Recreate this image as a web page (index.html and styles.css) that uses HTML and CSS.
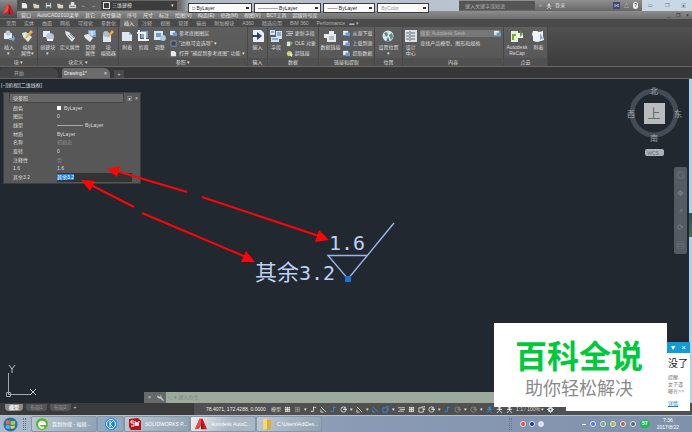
FILE: index.html
```html
<!DOCTYPE html>
<html lang="zh-CN">
  <head>
    <meta charset="utf-8" />
    <meta name="viewport" content="width=device-width, initial-scale=1" />
    <title>Drawing1*</title>
    <link rel="stylesheet" href="styles.css">
  </head>

  <body>
    <svg class="sprite" aria-hidden="true">
      <symbol id="logo" viewBox="0 0 16 16">
        <path d="M0 15 6 1h4l6 14h-5L8 10l-3 4z" fill="#c9171e" />
        <path d="M6 1h2v9l-8 5z" fill="#f04a45" />
        <path d="M8 6l3 9H8z" fill="#7d0d12" />
      </symbol>
      <symbol id="block" viewBox="0 0 12 12">
        <path d="M1 3h8v6H1z" fill="#e4ecf4" />
        <circle cx="5" cy="3" r="2.5" fill="#b9c9da" />
        <path d="M6 8h4V5l2 3-2 4-1-2H6z" fill="#7fa9d6" />
      </symbol>
      <symbol id="create" viewBox="0 0 12 12">
        <path d="M1 1h7v6H1z" fill="#e4ecf4" />
        <circle cx="8" cy="7" r="4" fill="#b4c8dc" />
        <path d="M5 9h6v2H5z" fill="#eef2f6" />
      </symbol>
      <symbol id="tag" viewBox="0 0 12 12">
        <path d="M1 1l4 1 6 6-3 4-6-7z" fill="#dfe3e6" />
        <path d="M4 5l4 4M6 4l4 4" stroke="#8a8f93" fill="none" />
      </symbol>
      <symbol id="edit" viewBox="0 0 12 12">
        <path d="M1 3l4-1 6 5-4 5-5-5z" fill="#e2e4de" />
        <path d="M10 0l2 2-6 6-2 1 1-3z" fill="#e9b44a" />
      </symbol>
      <symbol id="manage" viewBox="0 0 12 12">
        <path d="M4 0h8v7H4z" fill="#78a3d0" />
        <path d="M5 2h6M5 4h6M8 1v5" stroke="#e8f2fb" />
        <path d="M0 5l4-1 5 4-3 4-5-4z" fill="#e4e8ea" />
      </symbol>
      <symbol id="blockedit" viewBox="0 0 12 12">
        <path d="M1 5h8v7H1z" fill="#dce6ef" />
        <circle cx="4" cy="4" r="3" fill="#a9bfd4" />
        <path d="M10 0l2 2-5 5-2 1 1-3z" fill="#f0a63a" />
      </symbol>
      <symbol id="page" viewBox="0 0 12 12">
        <path d="M1 2h7l3 3v6H1z" fill="#dde7f1" />
        <path d="M8 2v3h3" fill="#9cb4cc" />
      </symbol>
      <symbol id="clip" viewBox="0 0 12 12">
        <path d="M4 1h7v7H4z" fill="#7da8d6" />
        <path d="M2 0v10h10M0 3h8v8" stroke="#eef3f7" stroke-width="2" fill="none" />
      </symbol>
      <symbol id="adjust" viewBox="0 0 12 12">
        <path d="M0 1h9v9H0z" fill="#dde6ee" />
        <path d="M2 3h5v4H2z" fill="#6c9ccf" />
        <circle cx="9" cy="8" r="3" fill="#a8c9ea" />
      </symbol>
      <symbol id="import" viewBox="0 0 12 12">
        <path d="M1 0h8l3 3v9H1z" fill="#e9eff5" />
        <path d="M0 5h5V2l5 4-5 4V7H0z" fill="#26445f" />
      </symbol>
      <symbol id="field" viewBox="0 0 12 12">
        <path d="M0 0h5v5H0zM6 1h6v8H6zM1 7h8v5H1z" fill="#cfe0f0" />
        <path d="M1 2h3M7 3h4M7 5h4M2 9h6" stroke="#4a7fb5" />
      </symbol>
      <symbol id="link" viewBox="0 0 12 12">
        <path d="M0 4h5V1h5v3h2v8H3V8H0z" fill="#e7ecef" />
        <path d="M5 7h5M5 9h5" stroke="#87939c" />
      </symbol>
      <symbol id="globe" viewBox="0 0 12 12">
        <circle cx="6" cy="6" r="5.500" fill="#d4e6e8" />
        <path d="M2 3l3-1 1 3-2 2zM7 5l3-2 1 4-2 3z" fill="#5b8b7e" />
        <path d="M6 7l2 5-2-1-2 1z" fill="#3f6f94" />
      </symbol>
      <symbol id="center" viewBox="0 0 12 12">
        <path d="M0 0h12v12H0z" fill="#dfe3e7" />
        <path d="M1 3h3M6 3h4M1 6h3M6 6h4M1 9h3M6 9h4M5 1v10" stroke="#5b6d7e" />
      </symbol>
      <symbol id="recap" viewBox="0 0 12 12">
        <path d="M0 1h7v11H0z" fill="#e5efd7" />
        <path d="M2 10V5h3" stroke="#76a832" stroke-width="2" fill="none" />
        <path d="M6 3h6v5H6z" fill="#f3f6f8" />
        <path d="M9 1l3 3-3 3z" fill="#5c9b3a" />
      </symbol>
      <symbol id="cloud" viewBox="0 0 12 12">
        <path d="M1 1h4l2 1 4-1v5l1 4-3 1-4 1-4-1V7L0 4z" fill="#eef3f8" />
        <path d="M8 3l3 5-3 2z" fill="#86add3" />
      </symbol>
      <symbol id="small" viewBox="0 0 8 8">
        <path d="M0 1h6v5H0z" fill="#cfe0f0" />
        <path d="M3 3h5v4H3z" fill="#6b9bd0" />
        <path d="M1 2h3" stroke="#fff" />
      </symbol>
      <symbol id="frame" viewBox="0 0 8 8">
        <path d="M1 1h6v6H1z" fill="#3b4654" stroke="#7e9cc0" />
      </symbol>
      <symbol id="lines" viewBox="0 0 8 8">
        <path d="M0 2h8M2 4h6M0 6h7" stroke="#d5d5d5" />
      </symbol>
      <symbol id="ole" viewBox="0 0 8 8">
        <path d="M1 2h4v5H1z" fill="#e2e6e0" />
        <path d="M4 1l4 2-3 3z" fill="#82b36a" />
      </symbol>
      <symbol id="hyper" viewBox="0 0 8 8">
        <circle cx="4" cy="4" r="3" fill="#c8d66a" />
        <path d="M4 4l4 1-2 3z" fill="#e9edf0" />
      </symbol>
      <symbol id="grid" viewBox="0 0 8 8">
        <path d="M1 2h6M1 4h6M1 6h6M2 1v6M4 1v6M6 1v6" stroke="currentColor" />
      </symbol>
      <symbol id="ortho" viewBox="0 0 8 8">
        <path d="M4 1v5H1M4 1l3 1M2 6v1" stroke="currentColor" fill="none" />
      </symbol>
      <symbol id="polar" viewBox="0 0 8 8">
        <circle cx="4" cy="4" r="3" stroke="currentColor" fill="none" />
        <path d="M4 4h4M4 4l2-3" stroke="currentColor" />
      </symbol>
      <symbol id="slope" viewBox="0 0 8 8">
        <path d="M1 1l6 6M1 4v3h3" stroke="currentColor" fill="none" />
      </symbol>
      <symbol id="square" viewBox="0 0 8 8">
        <path d="M1 2h5v5H1zM4 0h4v4H6" stroke="currentColor" fill="none" />
      </symbol>
      <symbol id="person" viewBox="0 0 8 8">
        <circle cx="4" cy="2" r="1.500" fill="currentColor" />
        <path d="M4 3v2L1 8M4 5l3 3M1 4h6" stroke="currentColor" fill="none" />
      </symbol>
      <symbol id="gear" viewBox="0 0 8 8">
        <circle cx="4" cy="4" r="2" stroke="currentColor" stroke-width="2" fill="none" />
        <path d="M4 0v2M4 6v2M0 4h2M6 4h2" stroke="currentColor" />
      </symbol>
      <symbol id="wrench" viewBox="0 0 8 8">
        <path d="M1 1l1 2 2 0 0-2 1 1v2l3 3-1 1-3-3H2L0 3z" fill="#d0d0d0" />
      </symbol>
      <symbol id="doc" viewBox="0 0 8 8">
        <path d="M1 1h4l2 2v4H1z" fill="#e9e9e9" />
      </symbol>
      <symbol id="open" viewBox="0 0 8 8">
        <path d="M0 2h3l1 1h3v4H1z" fill="#d9d2bc" />
      </symbol>
      <symbol id="save" viewBox="0 0 8 8">
        <path d="M1 1h6v6H1z" fill="#d3d8de" />
        <path d="M2 1h4v2H2zM2 5h4v2H2z" fill="#4d5862" />
      </symbol>
      <symbol id="print" viewBox="0 0 8 8">
        <path d="M2 0h4v3h2v4H0V3h2z" fill="#dcdcdc" />
        <path d="M1 5h6" stroke="#666" />
      </symbol>
    </svg>

    <header class="titlebar">
      <button class="app-button" aria-label="应用程序菜单"><svg><use href="#logo" /></svg></button>
      <div class="title-main">
        <div class="quick">
          <button aria-label="新建"><svg><use href="#doc" /></svg></button>
          <button aria-label="打开"><svg><use href="#open" /></svg></button>
          <button aria-label="保存"><svg><use href="#save" /></svg></button>
          <button aria-label="另存为"><svg><use href="#open" /></svg></button>
          <button aria-label="打印"><svg><use href="#print" /></svg></button>
          <button aria-label="放弃">←</button>
          <button aria-label="重做">→</button>
          <button class="workspace">三维建模</button>
        </div>
        <div class="layers">
          <select class="by-color" aria-label="颜色"><option>□ ByLayer</option></select>
          <select class="by-line" aria-label="线型"><option>———— ByLayer</option></select>
          <select class="by-weight" aria-label="线宽"><option>—— ByLayer</option></select>
          <select class="by-style" aria-label="打印样式" disabled><option>ByColor</option></select>
        </div>
        <div class="infocenter">
          <input type="text" aria-label="搜索" placeholder="键入关键字或短语" />
          <button aria-label="查找">⌕</button>
          <button><svg><use href="#person" /></svg>登录</button>
          <span class="spacer"></span>
          <button class="exchange" aria-label="交换">⋈</button>
          <button aria-label="连接">△</button>
          <button class="help" aria-label="帮助">?</button>
        </div>
        <div class="window-buttons">
          <button aria-label="最小化">▭</button>
          <button aria-label="还原">❐</button>
          <button aria-label="关闭">▣</button>
        </div>
      </div>
    </header>

    <nav class="menubar">
      <a href="#">窗口</a>
      <a href="#">AutoCAD2010菜单</a>
      <a href="#">其它</a>
      <a href="#">尺寸驱动</a>
      <a href="#">序号</a>
      <a href="#">尺寸</a>
      <a href="#">标注</a>
      <a href="#">绘图(V)</a>
      <a href="#">构造(E)</a>
      <a href="#">修改(M)</a>
      <a href="#">视图(V)</a>
      <a href="#">BCT工具</a>
      <a href="#">超级符号库</a>
      <span class="spacer"></span>
      <button aria-label="最小化">_</button>
      <button aria-label="还原">❐</button>
      <button aria-label="关闭">×</button>
    </nav>

    <nav class="ribbon-tabs">
      <a href="#">常用</a>
      <a href="#">实体</a>
      <a href="#">曲面</a>
      <a href="#">网格</a>
      <a href="#">可视化</a>
      <a href="#">参数化</a>
      <a href="#" class="active">插入</a>
      <a href="#">注释</a>
      <a href="#">视图</a>
      <a href="#">管理</a>
      <a href="#">输出</a>
      <a href="#">附加模块</a>
      <a href="#">A360</a>
      <a href="#">精选应用</a>
      <a href="#">BIM 360</a>
      <a href="#">Performance</a>
      <button aria-label="最小化功能区">▬ ▾</button>
    </nav>

    <section class="ribbon">
      <div class="panel panel-block">
        <div class="tools">
          <button class="tool"><svg><use href="#block" /></svg>插入<br />▾</button>
          <button class="tool"><svg><use href="#edit" /></svg>编辑<br />属性▾</button>
        </div>
        <h2>块 ▾</h2>
      </div>
      <div class="panel panel-define">
        <div class="tools">
          <button class="tool"><svg><use href="#create" /></svg>创建块<br />▾</button>
          <button class="tool"><svg><use href="#tag" /></svg>定义属性</button>
          <button class="tool"><svg><use href="#manage" /></svg>管理<br />属性</button>
          <button class="tool"><svg><use href="#blockedit" /></svg>块<br />编辑器</button>
        </div>
        <h2>块定义 ▾</h2>
      </div>
      <div class="panel panel-reference">
        <div class="tools">
          <button class="tool"><svg><use href="#page" /></svg>附着</button>
          <button class="tool"><svg><use href="#clip" /></svg>剪裁</button>
          <button class="tool"><svg><use href="#adjust" /></svg>调整</button>
          <div class="tool-list">
            <button><svg><use href="#small" /></svg>参考底图图层</button>
            <button><svg><use href="#frame" /></svg>"边框可变选项" ▾</button>
            <button><svg><use href="#doc" /></svg>打开 "捕捉到参考底图" 功能 ▾</button>
          </div>
        </div>
        <h2>参照 ▾</h2>
      </div>
      <div class="panel panel-import">
        <div class="tools">
          <button class="tool"><svg><use href="#import" /></svg>输入</button>
        </div>
        <h2>输入</h2>
      </div>
      <div class="panel panel-data">
        <div class="tools">
          <button class="tool"><svg><use href="#field" /></svg>字段</button>
          <div class="tool-list">
            <button><svg><use href="#lines" /></svg>更新字段</button>
            <button><svg><use href="#ole" /></svg>OLE 对象</button>
            <button><svg><use href="#hyper" /></svg>超链接</button>
          </div>
        </div>
        <h2>数据</h2>
      </div>
      <div class="panel panel-link">
        <div class="tools">
          <button class="tool"><svg><use href="#link" /></svg>数据链接</button>
          <div class="tool-list">
            <button><svg><use href="#small" /></svg>从源下载</button>
            <button><svg><use href="#small" /></svg>上载到源</button>
            <button><svg><use href="#small" /></svg>提取数据</button>
          </div>
        </div>
        <h2>链接和提取</h2>
      </div>
      <div class="panel panel-location">
        <div class="tools">
          <button class="tool"><svg><use href="#globe" /></svg>设置位置<br />▾</button>
        </div>
        <h2>位置</h2>
      </div>
      <div class="panel panel-content">
        <div class="tools">
          <button class="tool"><svg><use href="#center" /></svg>设计<br />中心</button>
          <div class="seek">
            <div class="seek-box">
              <input type="text" aria-label="搜索 Autodesk Seek" placeholder="搜索 Autodesk Seek" />
              <button aria-label="搜索"><svg><use href="#small" /></svg></button>
            </div>
            <p>查找产品模型、图形和规格</p>
          </div>
        </div>
        <h2>内容</h2>
      </div>
      <div class="panel panel-cloud">
        <div class="tools">
          <button class="tool"><svg><use href="#recap" /></svg>Autodesk<br />ReCap</button>
          <button class="tool"><svg><use href="#cloud" /></svg>附着</button>
        </div>
        <h2>点云</h2>
      </div>
    </section>

    <nav class="file-tabs">
      <a href="#">开始</a>
      <a href="#" class="active">Drawing1*<span>×</span></a>
      <button aria-label="新图形">+</button>
    </nav>

    <main class="canvas">
      <p class="view-label">[−][俯视][二维线框]</p>

      <section class="palette">
        <div class="palette-head">
          <select aria-label="对象类型"><option>块参照</option></select>
          <button class="pick" aria-label="快速选择">▣</button>
          <button aria-label="关闭">×</button>
        </div>
        <table>
          <tr><th>颜色</th><td><i class="swatch"></i>ByLayer</td></tr>
          <tr><th>图层</th><td>0</td></tr>
          <tr><th>线型</th><td><i class="linetype"></i>ByLayer</td></tr>
          <tr><th>材质</th><td>ByLayer</td></tr>
          <tr><th>名称</th><td class="dim">初始态</td></tr>
          <tr><th>旋转</th><td>0</td></tr>
          <tr><th>注释性</th><td class="dim">否</td></tr>
          <tr><th>1.6</th><td>1.6</td></tr>
          <tr><th>其余3.2</th><td class="editing"><mark>其余3.2</mark></td></tr>
        </table>
      </section>

      <svg class="drawing" viewBox="0 0 420 220">
        <g stroke="#9db3ee" stroke-width="1.400" fill="none">
          <path d="M394 144L348 200L328 176.500H368" />
        </g>
        <path d="M345 197h6v6h-6z" fill="#1d74c9" />
        <g class="annotation">
          <text x="329" y="171" class="digits">1.6</text>
          <text x="255" y="201">其余</text>
          <text x="299" y="201" class="digits">3.2</text>
        </g>
        <g stroke="#fb0606" stroke-width="2">
          <path d="M187 113L116 92M202 118L319 157M134 128L91 106M142 134L246 178" />
        </g>
        <g fill="#fb0606">
          <path d="M107 90l13-3-3 11zM329 161l-14 2 4-12zM81 101l14 1-5 10zM255 183l-14 0 5-11z" />
        </g>
      </svg>

      <svg class="compass" viewBox="0 0 60 80">
        <circle cx="30" cy="29" r="22" fill="none" stroke="#454c56" stroke-width="5" />
        <path d="M20 19h21v21H20z" fill="#b9bcbf" />
        <text x="30" y="34" class="face">上</text>
        <text x="30" y="10">北</text>
        <text x="30" y="57">南</text>
        <text x="7" y="33">西</text>
        <text x="54" y="33">东</text>
        <rect x="21" y="65" width="19" height="7" rx="2" fill="#aeb2bd" />
        <text x="29" y="71" class="wcs">WCS</text>
      </svg>

      <div class="navbar">
        <button aria-label="控制盘">◎</button>
        <button aria-label="平移">✥</button>
        <button aria-label="缩放">⌕</button>
        <button aria-label="动态观察">⟳</button>
        <button aria-label="运动">▤</button>
      </div>

      <svg class="ucs" viewBox="0 0 40 36">
        <path d="M5.500 9v21.500H27M3.500 28.500h4v4h-4z" fill="none" stroke="#a3a8ae" />
        <path d="M6 1l3 4 3-4M9 5v4M27 25l6 6M33 25l-6 6" fill="none" stroke="#c0c4c8" />
      </svg>

      <div class="command">
        <button aria-label="关闭">×</button>
        <button aria-label="自定义"><svg><use href="#wrench" /></svg></button>
        <input type="text" aria-label="命令" placeholder="›_ ▾ 键入命令" />
      </div>
      <div class="desktop-edge"></div>
    </main>

    <footer class="statusbar">
      <nav class="layouts">
        <a href="#" class="active">模型</a>
        <a href="#">布局1</a>
        <a href="#">布局2</a>
        <button aria-label="新建布局">+</button>
      </nav>
      <div class="status-tools">
        <output>78.4071, 172.4288, 0.0000</output>
        <button>模型</button>
        <button aria-label="栅格"><svg><use href="#grid" /></svg></button>
        <button class="off" aria-label="捕捉"><svg><use href="#grid" /></svg></button>
        <button aria-label="捕捉选项">▾</button>
        <button aria-label="推断约束"><svg><use href="#ortho" /></svg></button>
        <button aria-label="动态输入"><svg><use href="#slope" /></svg></button>
        <button class="on" aria-label="正交"><svg><use href="#ortho" /></svg></button>
        <button aria-label="极轴"><svg><use href="#polar" /></svg></button>
        <button aria-label="极轴选项">▾</button>
        <button aria-label="等轴测"><svg><use href="#slope" /></svg></button>
        <button aria-label="等轴测选项">▾</button>
        <button class="on" aria-label="对象追踪"><svg><use href="#slope" /></svg></button>
        <button class="on" aria-label="对象捕捉"><svg><use href="#square" /></svg></button>
        <button aria-label="捕捉设置">▾</button>
        <button aria-label="线宽"><svg><use href="#lines" /></svg></button>
        <button aria-label="透明度"><svg><use href="#grid" /></svg></button>
        <button aria-label="选择循环"><svg><use href="#square" /></svg></button>
        <button aria-label="三维捕捉"><svg><use href="#polar" /></svg></button>
        <button aria-label="三维捕捉选项">▾</button>
        <button class="on" aria-label="动态 UCS"><svg><use href="#ortho" /></svg></button>
        <button class="off" aria-label="过滤"><svg><use href="#polar" /></svg></button>
        <button aria-label="过滤选项">▾</button>
        <button class="off" aria-label="小控件"><svg><use href="#polar" /></svg></button>
        <button aria-label="小控件选项">▾</button>
        <button class="on" aria-label="注释可见性"><svg><use href="#person" /></svg></button>
        <button aria-label="自动缩放"><svg><use href="#person" /></svg></button>
        <button aria-label="注释比例"><svg><use href="#person" /></svg></button>
        <button>1:1 / 100% ▾</button>
        <button aria-label="切换工作空间"><svg><use href="#gear" /></svg></button>
      </div>
    </footer>

    <div class="taskbar">
      <button class="start" aria-label="开始">
        <svg viewBox="0 0 16 16">
          <circle cx="8" cy="8" r="7.500" fill="#2f6ea8" />
          <path d="M3 4q2-1 4 0v4q-2-1-4 0z" fill="#ef6a35" />
          <path d="M8 4q2 1 5 0v4q-3 1-5 0z" fill="#a4d04b" />
          <path d="M3 9q2-1 4 0v4q-2-1-4-1z" fill="#59b4ee" />
          <path d="M8 9q2 1 5 0l-1 3q-2 1-4 0z" fill="#f8d04a" />
        </svg>
      </button>
      <span class="grip"></span>
      <button class="task">
        <svg viewBox="0 0 12 12"><circle cx="6" cy="6" r="6" fill="#5cb531" /><path d="M3 6h6a3 3 0 1 0-1 3" fill="none" stroke="#fff" stroke-width="2" /></svg>
        <span>我到你搜 - 编辑...</span>
      </button>
      <button class="task pinned" aria-label="K">
        <svg viewBox="0 0 12 12"><circle cx="6" cy="6" r="6" fill="#1b83e6" /><circle cx="6" cy="6" r="4.500" fill="none" stroke="#fff" /><path d="M5 3v6M8 3L5 6l3 3" fill="none" stroke="#fff" /></svg>
      </button>
      <button class="task">
        <svg viewBox="0 0 12 12"><path d="M0 1l9-1 3 3v9H2L0 9z" fill="#b4151c" /><path d="M5 3H2v2h3v3H2M6 3l1 5 1-4 1 4 1-5" fill="none" stroke="#fff" /></svg>
        <span>SOLIDWORKS P...</span>
      </button>
      <button class="task current">
        <svg><use href="#logo" /></svg>
        <span>Autodesk AutoC...</span>
      </button>
      <button class="task">
        <svg viewBox="0 0 12 12"><path d="M2 1l4-1v11l-4 1z" fill="#f2d774" /><path d="M6 2h4v9l-4 1z" fill="#d9ae3c" /></svg>
        <span>C:\Users\Ad\Des...</span>
      </button>
      <span class="spacer"></span>
      <div class="tray">
        <span class="grip"></span>
        <i class="dot red"></i>
        <i class="dot navy"></i>
        <i class="dot pale"></i>
      </div>
      <div class="tray tray-icons">
        <i class="dash"></i>
        <i class="dot blue"></i>
        <i class="dot mint"></i>
        <i class="dot lime"></i>
        <i class="dot pink"></i>
        <i class="dot slate"></i>
        <b>57</b>
      </div>
      <time>7:36<br />2017/8/22</time>
    </div>

    <aside class="popup">
      <div class="popup-head">
        <button aria-label="收起">▾</button>
        <button aria-label="关闭">×</button>
      </div>
      <div class="popup-body">
        <h3>没了</h3>
        <p>提醒,<br />女子遇<br />曝光&gt;&gt;</p>
        <a href="#">详情</a>
      </div>
    </aside>

    <aside class="brand">
      <strong>百科全说</strong>
      <span>助你轻松解决</span>
    </aside>
  </body>
</html>
```

FILE: styles.css
```css
* {
  box-sizing: border-box;
}
body {
  margin: 0;
  height: 100vh;
  overflow: hidden;
  position: relative;
  display: flex;
  flex-direction: column;
  background: #212830;
  color: #dedede;
  font-family: "Liberation Sans", "Noto Sans CJK SC", sans-serif;
  font-size: 5px;
  line-height: 7px;
}
button,
input,
select {
  margin: 0;
  padding: 0;
  border: 0;
  background: none;
  color: inherit;
  font: inherit;
  min-width: 0;
}
select {
  appearance: none;
}
a {
  color: inherit;
  text-decoration: none;
}
h2,
h3,
p {
  margin: 0;
  font-size: inherit;
  font-weight: normal;
}
svg {
  display: block;
  flex: none;
}
.sprite {
  position: absolute;
  width: 0;
  height: 0;
}
.spacer {
  flex: 1;
}

/* title bar */
.titlebar {
  display: flex;
  height: 11px;
  background: linear-gradient(90deg, #4c4c4c 0, #6c6c6c 180px, #aeb7c2 190px, #bac4d0 460px);
}
.app-button {
  width: 17px;
  height: 18px;
  padding: 2px 3px;
  background: linear-gradient(#8b8b8b, #484848);
  z-index: 1;
}
.app-button svg {
  width: 11px;
  height: 13px;
}
.title-main {
  flex: 1;
  display: flex;
  align-items: stretch;
}
.quick {
  width: 160px;
  display: flex;
  align-items: center;
  gap: 5px;
  padding-left: 4px;
}
.quick svg {
  width: 7px;
  height: 7px;
}
.quick .workspace {
  flex: 1;
  display: flex;
  align-items: center;
  gap: 2px;
  height: 9px;
  padding-left: 2px;
  background: #3d3d3d;
  text-align: left;
}
.workspace::before {
  content: "";
  width: 5px;
  height: 5px;
  border: 1px solid #e4e4e4;
}
.workspace::after {
  content: "▾";
  margin: 0 3px 0 auto;
}
.layers {
  display: flex;
  gap: 2px;
  padding: 3px 0 0 11px;
  width: 252px;
  height: 13px;
  z-index: 1;
}
.layers select {
  height: 10px;
  padding: 0 3px;
  border: 1px solid #3c3c3c;
  background: #fafafa linear-gradient(#333, #333) right 2px center / 3px 2px no-repeat;
  color: #222;
}
.by-color {
  width: 64px;
}
.by-line {
  width: 68px;
}
.by-weight,
.by-style {
  width: 52px;
}
.layers select:disabled {
  color: #999;
  opacity: 1;
}
.infocenter {
  flex: 1;
  display: flex;
  align-items: center;
  gap: 4px;
  margin-left: 30px;
  padding-right: 4px;
  background: linear-gradient(#909090, #666);
}
.infocenter input {
  width: 76px;
  height: 9px;
  padding-left: 6px;
  background: #555;
}
.infocenter button {
  display: flex;
  align-items: center;
  gap: 3px;
}
.infocenter svg {
  width: 6px;
  height: 6px;
}
.infocenter .exchange {
  padding: 0 1px;
  background: #3c4a78;
}
.infocenter .help {
  padding: 0 1px;
  border-radius: 3px;
  background: #eee;
  color: #444;
  font-weight: bold;
}
.window-buttons {
  display: flex;
  justify-content: space-around;
  width: 50px;
  background: #c9d8e7;
  color: #5a6b80;
}
::placeholder {
  color: #b4b4b4;
  opacity: 1;
}

/* menu and ribbon */
.menubar {
  display: flex;
  align-items: center;
  gap: 6px;
  height: 8px;
  padding: 0 3px 0 21px;
  background: linear-gradient(#8d8d8d, #6e6e6e);
  color: #e8e8e8;
}
.menubar button {
  color: #222;
}
.ribbon-tabs {
  display: flex;
  height: 8px;
  padding-left: 2px;
  background: #4a4a4a;
  color: #b5b5b5;
}
.ribbon-tabs a {
  padding: 0 4px;
  line-height: 8px;
}
.ribbon-tabs .active {
  background: #686868;
  color: #eee;
}
.ribbon {
  display: flex;
  height: 40px;
  background: linear-gradient(#505050, #3c3c3c);
  border-bottom: 1px solid #686868;
}
.panel {
  display: flex;
  flex-direction: column;
  border-right: 1px solid #484848;
  background: linear-gradient(#5e5e5e, #575757);
}
.panel-block {
  width: 38px;
}
.panel-define {
  width: 81px;
}
.panel-reference {
  width: 129px;
}
.panel-import {
  width: 20px;
}
.panel-data {
  width: 51px;
}
.panel-link {
  width: 56px;
}
.panel-location {
  width: 28px;
}
.panel-content {
  width: 101px;
}
.panel-cloud {
  width: 44px;
}
.tools {
  flex: 1;
  display: flex;
  justify-content: space-around;
  padding-top: 3px;
}
.tool {
  display: flex;
  flex-direction: column;
  align-items: center;
  text-align: center;
  line-height: 6px;
  white-space: nowrap;
}
.tool svg {
  width: 12px;
  height: 12px;
  margin-bottom: 2px;
}
.tool-list {
  display: flex;
  flex-direction: column;
  gap: 3px;
}
.tool-list button {
  display: flex;
  align-items: center;
  gap: 2px;
  white-space: nowrap;
}
.tool-list svg,
.seek svg {
  width: 7px;
  height: 7px;
}
.panel h2 {
  height: 8px;
  background: #505050;
  line-height: 8px;
  text-align: center;
}
.seek-box {
  display: flex;
  width: 81px;
  height: 7px;
  margin-bottom: 3px;
  background: #777;
}
.seek-box input {
  flex: 1;
}
.file-tabs {
  display: flex;
  align-items: flex-end;
  gap: 4px;
  height: 12px;
  border-bottom: 1px solid #606060;
  background: #373737;
}
.file-tabs a {
  height: 10px;
  width: 58px;
  padding-left: 14px;
  border-radius: 3px 6px 0 0;
  background: #454545;
  line-height: 10px;
  color: #a8a8a8;
}
.file-tabs .active {
  display: flex;
  width: 48px;
  padding: 0 3px 0 2px;
  justify-content: space-between;
  background: #6b6b6b;
  color: #eee;
}
.file-tabs button {
  width: 10px;
  height: 8px;
  background: #4a4a4a;
}

/* drawing area: everything here floats over the model space */
.canvas {
  flex: 1;
  position: relative;
  overflow: hidden;
  background: #212830;
}
.view-label {
  padding: 3px 1px;
}
.palette {
  position: absolute;
  left: 3px;
  top: 13px;
  width: 138px;
  padding: 0 8px 1px 5px;
  border: 1px solid #3e3e3e;
  background: #575757;
}
.palette-head {
  display: flex;
  gap: 3px;
  height: 10px;
  margin: 0 -6px 1px 0;
}
.palette-head select {
  flex: 1;
  padding-left: 3px;
  border: 1px solid #444;
  background: #666;
}
.palette table {
  width: 100%;
  height: 78px;
  border-collapse: collapse;
}
.palette th,
.palette td {
  padding: 0;
  font-weight: normal;
  text-align: left;
}
.palette th {
  width: 48px;
  padding-left: 4px;
}
.swatch {
  display: inline-block;
  width: 4px;
  height: 4px;
  margin-right: 3px;
  background: #fff;
}
.linetype {
  display: inline-block;
  width: 26px;
  margin-right: 2px;
  border-top: 1px solid #aaa;
  vertical-align: middle;
}
.palette .dim {
  color: #8f8f8f;
}
.editing {
  background: #333;
}
.palette mark {
  background: #2382dc;
  color: #fff;
}
.drawing {
  position: absolute;
  left: 0;
  top: 0;
  width: 420px;
  height: 220px;
}
.annotation {
  fill: #bfd0f6;
  font-family: "Noto Sans CJK SC", sans-serif;
  font-size: 22px;
}
.digits {
  font-family: "DejaVu Sans Mono", monospace;
  font-size: 20px;
}
.compass {
  position: absolute;
  right: 8px;
  top: 5px;
  width: 60px;
  height: 80px;
  fill: #a2a6ab;
  font-size: 8px;
  text-anchor: middle;
}
.compass .face {
  fill: #686b6e;
  font-size: 13px;
}
.compass .wcs {
  fill: #626672;
  font-size: 5px;
}
.navbar {
  position: absolute;
  right: 5px;
  top: 88px;
  display: flex;
  flex-direction: column;
  justify-content: space-around;
  width: 13px;
  height: 87px;
  border-radius: 2px;
  background: #555b63;
  color: #7a8087;
  font-size: 8px;
}
.ucs {
  position: absolute;
  left: 3px;
  bottom: 3px;
  width: 40px;
  height: 36px;
}
.command {
  position: absolute;
  left: 144px;
  right: 3px;
  bottom: 0;
  display: flex;
  height: 11px;
  background: #66696a;
}
.command button {
  width: 11px;
}
.command svg {
  width: 7px;
  height: 7px;
  margin: auto;
}
.command input {
  flex: 1;
  padding-left: 2px;
  background: #9baa9b;
}
.command ::placeholder {
  color: #7c887c;
}
.desktop-edge {
  position: absolute;
  right: 0;
  top: 0;
  bottom: 0;
  width: 3px;
  background: linear-gradient(#a9d5e8 134px, #2b5361 134px, #4c6a52 158px, #a9d5e8 158px);
}

/* status bar */
.statusbar {
  display: flex;
  justify-content: space-between;
  height: 12px;
  background: #3b3b3b;
}
.layouts {
  display: flex;
  align-items: flex-start;
  gap: 3px;
  padding: 1px 5px;
}
.layouts a {
  padding: 0 4px;
  border-radius: 0 0 4px 4px;
  background: #555;
  color: #999;
}
.layouts .active {
  background: #8b8b8b;
  color: #fff;
  font-weight: bold;
}
.status-tools {
  display: flex;
  align-items: center;
  gap: 3px;
  width: 498px;
  padding-left: 12px;
  background: #505050;
}
.status-tools output {
  width: 62px;
  color: #eee;
}
.status-tools svg {
  width: 7px;
  height: 7px;
}
.status-tools .on {
  color: #3689d8;
}
.status-tools .off {
  color: #888;
}

/* desktop taskbar */
.taskbar {
  display: flex;
  align-items: center;
  height: 17px;
  padding-right: 13px;
  border-top: 1px solid #b5c0cd;
  background: linear-gradient(90deg, #a9bacb, #899bb4 360px, #7f91ab);
  color: #fff;
}
.start {
  margin: 0 5px 0 3px;
}
.start svg {
  width: 15px;
  height: 15px;
}
.grip {
  width: 3px;
  height: 12px;
  margin-right: 5px;
  border: 1px dotted #63768a;
}
.task {
  display: flex;
  align-items: center;
  gap: 4px;
  width: 66px;
  height: 16px;
  padding: 0 4px;
  border: 1px solid #8596a8;
  border-radius: 2px;
  background: linear-gradient(120deg, #bcc8d2, #8fa1b4);
  white-space: nowrap;
}
.task svg {
  width: 12px;
  height: 12px;
}
.pinned {
  width: 27px;
  justify-content: center;
  background: #91a9bf;
}
.current {
  background: linear-gradient(120deg, #eef0f2, #a9b6c4 60%);
}
.tray {
  display: flex;
  align-items: center;
  gap: 3px;
}
.tray-icons {
  gap: 4px;
  margin: 0 7px 0 38px;
}
.dot {
  width: 6px;
  height: 6px;
  border-radius: 3px;
  border: 1px solid #e3e9ee;
}
.dash {
  width: 4px;
  height: 1px;
  background: #fff;
}
.red {
  background: #e84b32;
}
.navy {
  background: #25318b;
}
.pale {
  background: #d5dfe8;
}
.blue {
  background: #477ed4;
}
.mint {
  background: #77a574;
}
.lime {
  background: #a5b92a;
}
.pink {
  background: #c05864;
}
.slate {
  background: #566878;
}
.tray b {
  width: 10px;
  height: 8px;
  border-radius: 4px;
  background: #21b95c;
  text-align: center;
}
.taskbar time {
  text-align: center;
}

/* floating cards */
.popup {
  position: absolute;
  right: 2px;
  bottom: 21px;
  width: 124px;
  background: #fff;
  color: #777;
}
.popup-head {
  display: flex;
  justify-content: flex-end;
  gap: 6px;
  height: 11px;
  padding-right: 4px;
  background: #159bd3;
  color: #fff;
  font-size: 8px;
}
.popup-body {
  display: flex;
  flex-direction: column;
  gap: 5px;
  height: 58px;
  padding: 5px 0 0 102px;
}
.popup h3 {
  color: #222;
  font-size: 10px;
  line-height: 11px;
}
.popup a {
  color: #1b78c8;
  text-decoration: underline;
}
.brand {
  position: absolute;
  right: 25px;
  bottom: 25px;
  display: flex;
  flex-direction: column;
  align-items: center;
  width: 173px;
  padding: 14px 3px 6px 0;
  background: #fff;
}
.brand strong {
  color: #00c93a;
  font-size: 32px;
  line-height: 40px;
}
.brand span {
  color: #8a8a8a;
  font-size: 18px;
  line-height: 24px;
}
```
